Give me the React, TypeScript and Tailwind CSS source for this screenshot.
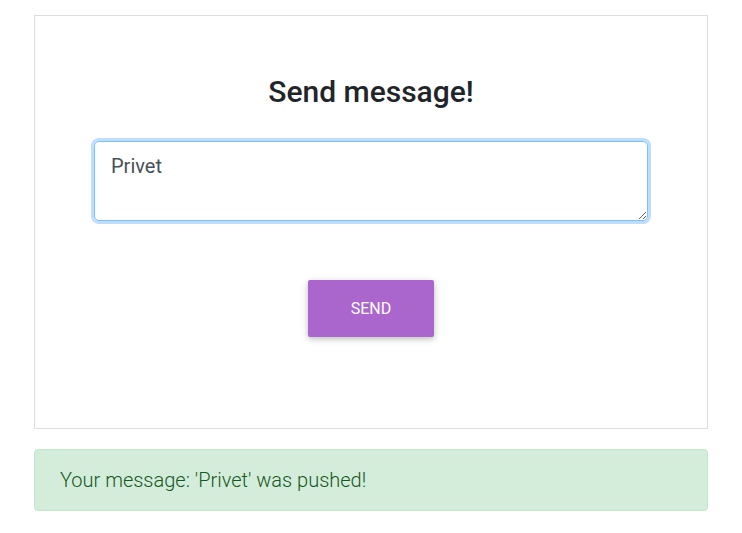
export default function App() {
  return (
    <div className="min-h-screen bg-white px-[34px] pt-[15px] font-['Roboto',sans-serif]">
      <div className="flex h-[414px] flex-col items-center border border-[#dddddd] bg-white">
        <h2 className="mt-[58px] text-[30px] font-medium leading-[36px] text-[#212529]">Send message!</h2>
        <textarea
          defaultValue="Privet"
          className="mt-[31px] h-[80px] w-[554px] rounded-[5px] border border-[#80bdff] px-[16px] py-[12px] text-[20px] font-normal leading-[24px] text-[#495057] shadow-[0_0_0_3px_rgba(0,123,255,0.25)] outline-none"
        />
        <button className="mt-[59px] h-[57px] w-[126px] rounded-[2px] bg-[#aa66cc] text-[16px] text-white shadow-[0_2px_5px_0_rgba(0,0,0,0.16),0_2px_10px_0_rgba(0,0,0,0.12)]">
          SEND
        </button>
      </div>
      <div className="mt-[20px] flex h-[62px] items-center rounded-[4px] border border-[#c3e6cb] bg-[#d4edda] px-[25px] text-[20px] font-light text-[#155724]">
        Your message: 'Privet' was pushed!
      </div>
    </div>
  );
}
